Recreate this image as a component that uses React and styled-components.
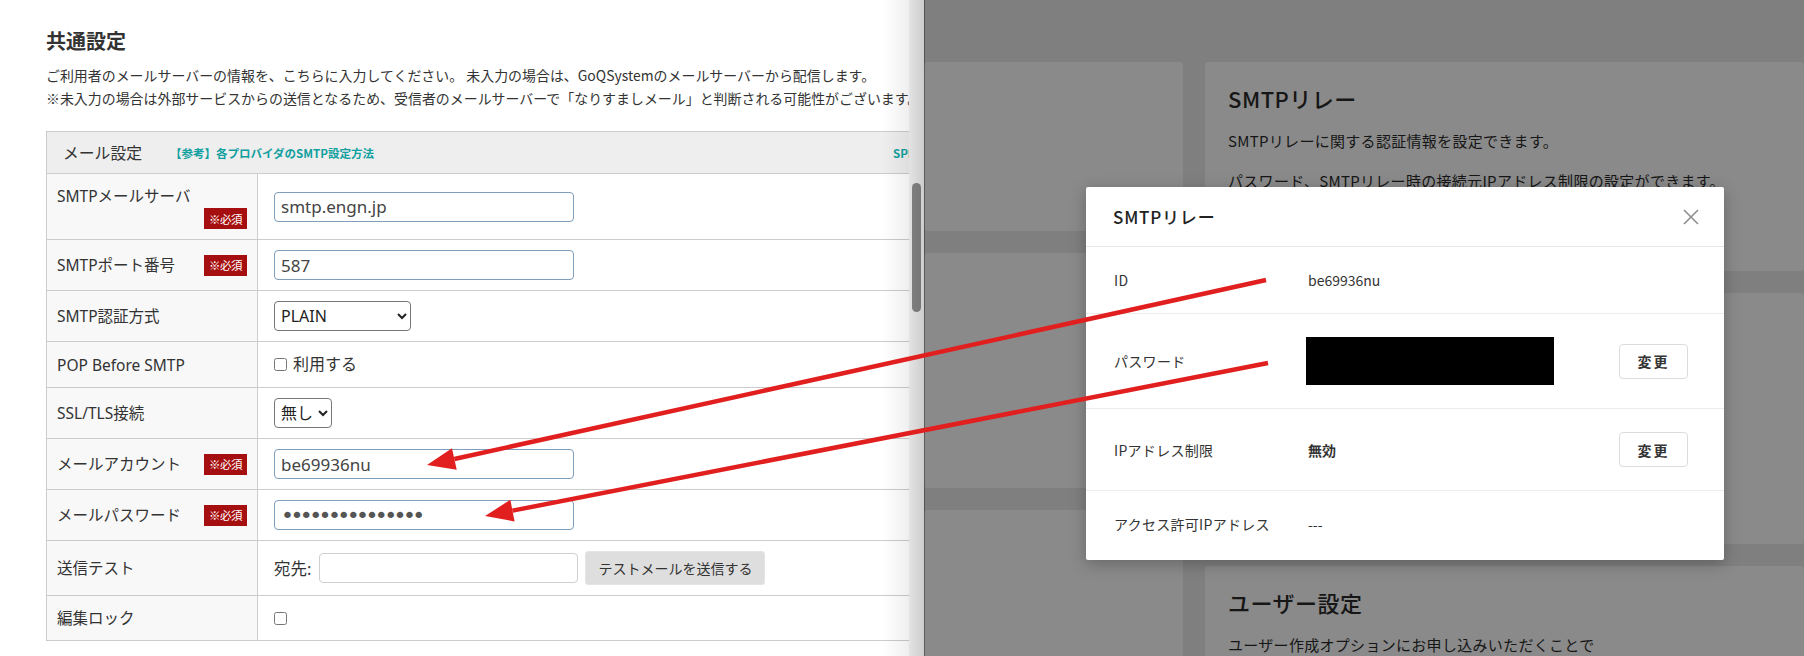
import React from 'react'
import styled, { createGlobalStyle } from 'styled-components';

const GlobalStyle = createGlobalStyle`
  html, body { margin: 0; padding: 0; }
  body { background: #7f7f7f; }
  * { box-sizing: border-box; }
`

const Screen = styled.div`
  position: relative;
  width: 1804px;
  height: 656px;
  overflow: hidden;
  display: flex;
  background: #7f7f7f;
`

const LeftPanel = styled.div`
  position: relative;
  z-index: 1;
  width: 924px;
  flex-shrink: 0;
  display: flex;
  background: #fff;
  box-shadow: 1px 0 0 rgba(0,0,0,0.35);
  font-family: "Noto Sans", "Noto Sans CJK JP", sans-serif;
  color: #333;
  &::after {
    content: '';
    position: absolute;
    top: 0;
    right: 0;
    bottom: 0;
    width: 42px;
    pointer-events: none;
    background: linear-gradient(to right, rgba(0,0,0,0), rgba(0,0,0,0.06) 60%, rgba(0,0,0,0.16));
  }
`

const LeftScroll = styled.div`
  width: 909px;
  overflow: hidden;
  padding: 27px 0 0 46px;
`

const ScrollTrack = styled.div`
  width: 15px;
  background: #f4f4f4;
  padding: 183px 0 0 3px;
`

const ScrollThumb = styled.div`
  width: 9px;
  height: 129px;
  border-radius: 5px;
  background: #8a8a8a;
`

const PageTitle = styled.h2`
  margin: 0;
  font-family: "Noto Sans CJK JP", sans-serif;
  font-size: 20px;
  line-height: 28px;
  font-weight: 700;
  color: #333;
`

const Desc = styled.p`
  margin: 9px 0 0;
  font-family: "Noto Sans CJK JP", sans-serif;
  font-size: 13.95px;
  line-height: 23px;
  white-space: nowrap;
  color: #333;
`

const Table = styled.div`
  width: 1000px;
  margin-top: 21px;
  border: 1px solid #ccc;
  border-bottom: none;
`

const TableHead = styled.div`
  display: flex;
  align-items: center;
  height: 42px;
  padding-left: 16px;
  background: #eee;
  border-bottom: 1px solid #ccc;
`

const HeadMain = styled.div`
  width: 830px;
  display: flex;
  align-items: center;
  gap: 28px;
`

const HeadTitle = styled.span`
  font-family: "Noto Sans CJK JP", sans-serif;
  font-size: 15.8px;
  color: #333;
`

const HeadLink = styled.a`
  font-family: "Noto Sans CJK JP", sans-serif;
  font-size: 11.5px;
  font-weight: 700;
  color: #10a0a0;
  text-decoration: none;
  white-space: nowrap;
`

const Row = styled.div`
  display: flex;
  border-bottom: 1px solid #ccc;
`

const LabelCell = styled.div`
  width: 211px;
  flex-shrink: 0;
  display: flex;
  flex-direction: ${p => (p.$stacked ? 'column' : 'row')};
  align-items: ${p => (p.$stacked ? 'stretch' : 'center')};
  justify-content: space-between;
  padding: 10px;
  background: #f8f8f8;
  border-right: 1px solid #ccc;
`

const LabelText = styled.span`
  font-family: "Noto Sans", "Noto Sans CJK JP", sans-serif;
  font-size: 15.5px;
  line-height: 24px;
  color: #333;
  white-space: nowrap;
`

const Badge = styled.span`
  align-self: ${p => (p.$stacked ? 'flex-end' : 'center')};
  width: 43px;
  height: 21px;
  display: flex;
  align-items: center;
  justify-content: center;
  background: #a60f0f;
  color: #fff;
  font-family: "Noto Sans CJK JP", sans-serif;
  font-size: 11.5px;
  letter-spacing: -0.5px;
`

const ValueCell = styled.div`
  flex: 1;
  display: flex;
  align-items: center;
  padding: 10px 16px;
  font-family: "Noto Sans", "Noto Sans CJK JP", sans-serif;
  font-size: 16px;
  line-height: 25px;
  color: #333;
`

const FieldCaption = styled.span`
  margin-right: 8px;
  font-size: 16.5px;
`

const TextInput = styled.input`
  width: ${p => p.$w || 300}px;
  height: 30px;
  padding: 0 6px;
  border: 1px solid ${p => (p.$plain ? '#cfcfcf' : '#7f9dbd')};
  border-radius: 4px;
  font-family: "Noto Sans", sans-serif;
  font-size: 17px;
  color: #444;
  background: #fff;
  outline: none;
`

const PassInput = styled(TextInput)`
  font-family: "DejaVu Sans", sans-serif;
  font-size: 22px;
  letter-spacing: -3.6px;
  color: #555;
`

const Select = styled.select`
  width: ${p => p.$w}px;
  height: 30px;
  padding: 0 2px;
  border: 1px solid #767676;
  border-radius: 4px;
  font-family: "Noto Sans", "Noto Sans CJK JP", sans-serif;
  font-size: 16px;
  color: #222;
  background: #fff;
`

const Check = styled.input`
  width: 13px;
  height: 13px;
  margin: 0 6px 0 0;
`

const SendButton = styled.button`
  height: 34px;
  width: 180px;
  margin-left: 7px;
  border: 1px solid #e4e4e4;
  border-radius: 3px;
  background: #dedede;
  font-family: "Noto Sans CJK JP", sans-serif;
  font-size: 14px;
  color: #333;
`

const RightPanel = styled.div`
  flex: 1;
  display: grid;
  grid-template-columns: 259px 1fr;
  column-gap: 22px;
  padding-top: 62px;
  background: #7f7f7f;
  font-family: "Noto Sans CJK JP", sans-serif;
  color: #161616;
`

const CardColumn = styled.div`
  display: flex;
  flex-direction: column;
  gap: 22px;
`

const Card = styled.div`
  height: ${p => (p.$h ? `${p.$h}px` : 'auto')};
  flex: ${p => (p.$h ? 'none' : 1)};
  background: #8a8a8a;
  border-radius: 3px;
  padding: 20px 23px;
`

const CardTitle = styled.h3`
  margin: 0 0 15px;
  font-size: 22px;
  line-height: 32px;
  font-weight: 500;
  letter-spacing: 0.5px;
`

const CardText = styled.p`
  margin: 0 0 16px;
  font-size: 15px;
  line-height: 24px;
  white-space: nowrap;
  letter-spacing: 0.3px;
`

const Modal = styled.div`
  position: absolute;
  z-index: 2;
  left: 1086px;
  top: 187px;
  width: 638px;
  background: #fff;
  border-radius: 2px;
  box-shadow: 0 4px 16px rgba(0,0,0,0.25);
  font-family: "Noto Sans CJK JP", sans-serif;
  color: #333;
`

const ModalHead = styled.div`
  height: 60px;
  display: flex;
  align-items: center;
  justify-content: space-between;
  padding: 0 22px 0 27px;
  border-bottom: 1px solid #e6e6e6;
`

const ModalTitle = styled.span`
  font-size: 17px;
  font-weight: 500;
  letter-spacing: 0.8px;
  color: #222;
`

const CloseButton = styled.button`
  width: 22px;
  height: 22px;
  padding: 0;
  border: none;
  background: none;
  display: flex;
  align-items: center;
  justify-content: center;
`

const ModalRow = styled.div`
  display: grid;
  grid-template-columns: 194px 1fr auto;
  align-items: center;
  padding: 23px 36px ${p => (p.$last ? 26 : 23)}px 28px;
  border-bottom: ${p => (p.$last ? 'none' : '1px solid #ececec')};
  font-size: 14px;
  line-height: 20px;
`

const ModalLabel = styled.span`
  color: #333;
  letter-spacing: 0.3px;
`

const ModalValue = styled.span`
  color: #333;
  font-weight: ${p => (p.$bold ? 700 : 400)};
`

const Redacted = styled.div`
  width: 248px;
  height: 48px;
  margin-left: -2px;
  background: #000;
`

const ChangeButton = styled.button`
  width: 69px;
  height: 35px;
  border: 1px solid #dcdcdc;
  border-radius: 4px;
  background: #fff;
  font-family: "Noto Sans CJK JP", sans-serif;
  font-size: 14px;
  font-weight: 700;
  letter-spacing: 2px;
  color: #333;
`

const Overlay = styled.svg`
  position: absolute;
  z-index: 3;
  left: 0;
  top: 0;
  pointer-events: none;
`

const arrows = [
  { x1: 1266, y1: 280, x2: 427, y2: 465 },
  { x1: 1268, y1: 363, x2: 485, y2: 516 },
]

function Arrow({ x1, y1, x2, y2 }) {
  const len = Math.hypot(x2 - x1, y2 - y1)
  const ux = (x2 - x1) / len
  const uy = (y2 - y1) / len
  const bx = x2 - ux * 28
  const by = y2 - uy * 28
  const nx = -uy * 11
  const ny = ux * 11
  return (
    <g>
      <line x1={x1} y1={y1} x2={bx} y2={by} stroke="#e21f1f" strokeWidth="4.5" />
      <polygon points={`${x2},${y2} ${bx + nx},${by + ny} ${bx - nx},${by - ny}`} fill="#e21f1f" />
    </g>
  )
}

const rows = [
  { label: 'SMTPメールサーバ', req: true, stacked: true, input: 'smtp.engn.jp' },
  { label: 'SMTPポート番号', req: true, input: '587' },
]

export default function App() {
  return (
    <>
      <GlobalStyle />
      <Screen>
        <LeftPanel>
          <LeftScroll>
            <PageTitle>共通設定</PageTitle>
            <Desc>
              ご利用者のメールサーバーの情報を、こちらに入力してください。 未入力の場合は、GoQSystemのメールサーバーから配信します。<br />
              ※未入力の場合は外部サービスからの送信となるため、受信者のメールサーバーで「なりすましメール」と判断される可能性がございます。
            </Desc>
            <Table>
              <TableHead>
                <HeadMain>
                  <HeadTitle>メール設定</HeadTitle>
                  <HeadLink>【参考】各プロバイダのSMTP設定方法</HeadLink>
                </HeadMain>
                <HeadLink>SPF・DKIMの設定方法</HeadLink>
              </TableHead>

              {rows.map(r => (
                <Row key={r.label}>
                  <LabelCell $stacked={r.stacked}>
                    <LabelText>{r.label}</LabelText>
                    <Badge $stacked={r.stacked}>※必須</Badge>
                  </LabelCell>
                  <ValueCell>
                    <TextInput defaultValue={r.input} />
                  </ValueCell>
                </Row>
              ))}

              <Row>
                <LabelCell><LabelText>SMTP認証方式</LabelText></LabelCell>
                <ValueCell>
                  <Select $w={137} defaultValue="PLAIN">
                    <option>PLAIN</option>
                    <option>LOGIN</option>
                  </Select>
                </ValueCell>
              </Row>

              <Row>
                <LabelCell><LabelText>POP Before SMTP</LabelText></LabelCell>
                <ValueCell>
                  <Check type="checkbox" />
                  利用する
                </ValueCell>
              </Row>

              <Row>
                <LabelCell><LabelText>SSL/TLS接続</LabelText></LabelCell>
                <ValueCell>
                  <Select $w={58} defaultValue="無し">
                    <option>無し</option>
                    <option>SSL</option>
                    <option>TLS</option>
                  </Select>
                </ValueCell>
              </Row>

              <Row>
                <LabelCell>
                  <LabelText>メールアカウント</LabelText>
                  <Badge>※必須</Badge>
                </LabelCell>
                <ValueCell>
                  <TextInput defaultValue="be69936nu" />
                </ValueCell>
              </Row>

              <Row>
                <LabelCell>
                  <LabelText>メールパスワード</LabelText>
                  <Badge>※必須</Badge>
                </LabelCell>
                <ValueCell>
                  <PassInput type="password" defaultValue="xxxxxxxxxxxxxxx" />
                </ValueCell>
              </Row>

              <Row>
                <LabelCell><LabelText>送信テスト</LabelText></LabelCell>
                <ValueCell>
                  <FieldCaption>宛先:</FieldCaption>
                  <TextInput $plain $w={259} />
                  <SendButton>テストメールを送信する</SendButton>
                </ValueCell>
              </Row>

              <Row>
                <LabelCell><LabelText>編集ロック</LabelText></LabelCell>
                <ValueCell>
                  <Check type="checkbox" />
                </ValueCell>
              </Row>
            </Table>
          </LeftScroll>
          <ScrollTrack><ScrollThumb /></ScrollTrack>
        </LeftPanel>

        <RightPanel>
          <CardColumn>
            <Card $h={169} />
            <Card $h={235} />
            <Card />
          </CardColumn>
          <CardColumn>
            <Card $h={209}>
              <CardTitle>SMTPリレー</CardTitle>
              <CardText>SMTPリレーに関する認証情報を設定できます。</CardText>
              <CardText>パスワード、SMTPリレー時の接続元IPアドレス制限の設定ができます。</CardText>
            </Card>
            <Card $h={251} />
            <Card>
              <CardTitle>ユーザー設定</CardTitle>
              <CardText>ユーザー作成オプションにお申し込みいただくことで</CardText>
            </Card>
          </CardColumn>
        </RightPanel>

        <Modal>
          <ModalHead>
            <ModalTitle>SMTPリレー</ModalTitle>
            <CloseButton aria-label="閉じる">
              <svg width="16" height="16" viewBox="0 0 16 16">
                <path d="M1 1 L15 15 M15 1 L1 15" stroke="#8f8f8f" strokeWidth="1.6" fill="none" />
              </svg>
            </CloseButton>
          </ModalHead>
          <ModalRow>
            <ModalLabel>ID</ModalLabel>
            <ModalValue>be69936nu</ModalValue>
            <span />
          </ModalRow>
          <ModalRow>
            <ModalLabel>パスワード</ModalLabel>
            <Redacted />
            <ChangeButton>変更</ChangeButton>
          </ModalRow>
          <ModalRow>
            <ModalLabel>IPアドレス制限</ModalLabel>
            <ModalValue $bold>無効</ModalValue>
            <ChangeButton>変更</ChangeButton>
          </ModalRow>
          <ModalRow $last>
            <ModalLabel>アクセス許可IPアドレス</ModalLabel>
            <ModalValue>---</ModalValue>
            <span />
          </ModalRow>
        </Modal>

        <Overlay width="1804" height="656" viewBox="0 0 1804 656">
          {arrows.map((a, i) => <Arrow key={i} {...a} />)}
        </Overlay>
      </Screen>
    </>
  )
}
